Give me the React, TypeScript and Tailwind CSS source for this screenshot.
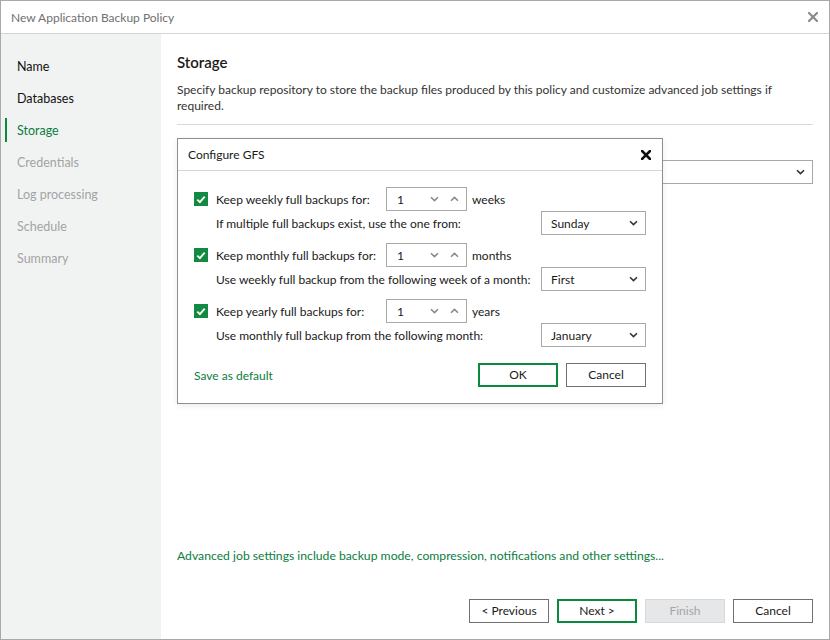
import React from "react";

function ChevronDown({ className = "" }: { className?: string }) {
  return (
    <svg width="9" height="6" viewBox="0 0 9 6" className={className}>
      <path d="M1 1.2 L4.5 4.6 L8 1.2" fill="none" stroke="currentColor" strokeWidth="1.6" />
    </svg>
  );
}

function ChevronUp({ className = "" }: { className?: string }) {
  return (
    <svg width="9" height="6" viewBox="0 0 9 6" className={className}>
      <path d="M1 4.8 L4.5 1.4 L8 4.8" fill="none" stroke="currentColor" strokeWidth="1.6" />
    </svg>
  );
}

function CloseIcon({ size, stroke, color }: { size: number; stroke: number; color: string }) {
  return (
    <svg width={size} height={size} viewBox="0 0 10 10">
      <path d="M1 1 L9 9 M9 1 L1 9" stroke={color} strokeWidth={stroke} strokeLinecap="square" />
    </svg>
  );
}

function Check() {
  return (
    <div className="w-[14px] h-[14px] bg-[#128a42] flex items-center justify-center shrink-0">
      <svg width="10" height="9" viewBox="0 0 10 9">
        <path d="M1.3 4.6 L3.9 7.1 L8.7 1.6" fill="none" stroke="#ffffff" strokeWidth="1.8" />
      </svg>
    </div>
  );
}

function Spinner() {
  return (
    <div className="w-[81px] h-6 border border-[#a8a8a8] bg-white flex items-center pl-[10px] pr-[5px]">
      <span className="flex-1 text-[#1a1a1a] pt-px">1</span>
      <ChevronDown className="text-[#8a8a8a] mr-[11px]" />
      <ChevronUp className="text-[#8a8a8a] mr-[2px]" />
    </div>
  );
}

function Select({ value }: { value: string }) {
  return (
    <div className="w-[105px] h-6 border border-[#a8a8a8] bg-white flex items-center pl-[9px] pr-[7px]">
      <span className="flex-1 text-[#1a1a1a] pt-px">{value}</span>
      <ChevronDown className="text-[#333333]" />
    </div>
  );
}

function Group({ label, unit, sub, value }: { label: string; unit: string; sub: string; value: string }) {
  return (
    <div className="flex flex-col">
      <div className="h-6 flex items-center">
        <Check />
        <span className="ml-2 w-[170px] text-[#1a1a1a] whitespace-nowrap pt-px">{label}</span>
        <Spinner />
        <span className="ml-[5px] text-[#1a1a1a] pt-px">{unit}</span>
      </div>
      <div className="h-6 flex items-center justify-between pl-[22px]">
        <span className="text-[#1a1a1a] whitespace-nowrap pt-px">{sub}</span>
        <Select value={value} />
      </div>
    </div>
  );
}

export default function App() {
  const steps = [
    { name: "Name", state: "done" },
    { name: "Databases", state: "done" },
    { name: "Storage", state: "active" },
    { name: "Credentials", state: "off" },
    { name: "Log processing", state: "off" },
    { name: "Schedule", state: "off" },
    { name: "Summary", state: "off" },
  ];
  return (
    <div
      className="w-[830px] h-[640px] border border-[#a9a9a9] bg-white flex flex-col text-[12px] leading-4"
      style={{ fontFamily: "Lato, 'Noto Sans', sans-serif" }}
    >
      <div className="h-[33px] shrink-0 border-b border-[#d4d4d4] flex items-center justify-between pl-[10px] pr-[11px]">
        <span className="text-[12px] text-[#6f6f6f] pt-px">New Application Backup Policy</span>
        <CloseIcon size={10} stroke={2.2} color="#8a8a8a" />
      </div>
      <div className="flex flex-1 min-h-0">
        <div className="w-[160px] shrink-0 bg-[#f1f3f3] pt-[17px] flex flex-col">
          {steps.map((s) => (
            <div key={s.name} className="h-8 flex items-center relative">
              {s.state === "active" && <div className="absolute left-[4px] top-[3px] w-[2px] h-6 bg-[#0b8a3e]" />}
              <span
                className={`pl-4 text-[12.5px] ${
                  s.state === "active" ? "text-[#0b7d3e]" : s.state === "done" ? "text-[#111111]" : "text-[#a3a3a3]"
                }`}
              >
                {s.name}
              </span>
            </div>
          ))}
        </div>
        <div className="flex-1 relative flex flex-col px-4 pt-[18px] pb-4">
          <div className="text-[15px] leading-5 font-semibold text-[#1a1a1a]">Storage</div>
          <div className="mt-[10px] text-[#333333] whitespace-nowrap">
            Specify backup repository to store the backup files produced by this policy and customize advanced job settings if
            <br />
            required.
          </div>
          <div className="mt-[10px] border-t border-[#d9d9d9]" />
          <div className="mt-[35px] h-6 border border-[#a8a8a8] flex items-center justify-end pr-[7px]">
            <ChevronDown className="text-[#333333]" />
          </div>
          <div className="flex-1" />
          <div className="text-[#0b7d3e] text-[12.2px]">
            Advanced job settings include backup mode, compression, notifications and other settings...
          </div>
          <div className="mt-[35px] flex justify-end gap-2">
            <button className="w-20 h-6 border border-[#707070] bg-white text-[#1a1a1a]">&lt; Previous</button>
            <button className="w-20 h-6 border-2 border-[#0b8a3e] bg-white text-[#1a1a1a]">Next &gt;</button>
            <button className="w-20 h-6 border border-[#d8d8d8] bg-[#e6e7e8] text-[#a6a6a6]">Finish</button>
            <button className="w-20 h-6 border border-[#707070] bg-white text-[#1a1a1a]">Cancel</button>
          </div>

          <div className="absolute left-4 top-[104px] w-[486px] border border-[#8e8e8e] bg-white flex flex-col shadow-[0_2px_6px_rgba(0,0,0,0.08)]">
            <div className="h-8 border-b border-[#d4d4d4] flex items-center justify-between pl-[10px] pr-[11px]">
              <span className="text-[12px] text-[#1a1a1a] pt-px">Configure GFS</span>
              <CloseIcon size={10} stroke={2.6} color="#111111" />
            </div>
            <div className="px-4 pt-4 pb-4 flex flex-col">
              <div className="flex flex-col gap-2">
                <Group
                  label="Keep weekly full backups for:"
                  unit="weeks"
                  sub="If multiple full backups exist, use the one from:"
                  value="Sunday"
                />
                <Group
                  label="Keep monthly full backups for:"
                  unit="months"
                  sub="Use weekly full backup from the following week of a month:"
                  value="First"
                />
                <Group
                  label="Keep yearly full backups for:"
                  unit="years"
                  sub="Use monthly full backup from the following month:"
                  value="January"
                />
              </div>
              <div className="mt-4 h-6 flex items-center justify-between">
                <span className="text-[#0b7d3e] pt-px">Save as default</span>
                <div className="flex gap-2">
                  <button className="w-20 h-6 border-2 border-[#0b8a3e] bg-white text-[#1a1a1a]">OK</button>
                  <button className="w-20 h-6 border border-[#707070] bg-white text-[#1a1a1a]">Cancel</button>
                </div>
              </div>
            </div>
          </div>
        </div>
      </div>
    </div>
  );
}
